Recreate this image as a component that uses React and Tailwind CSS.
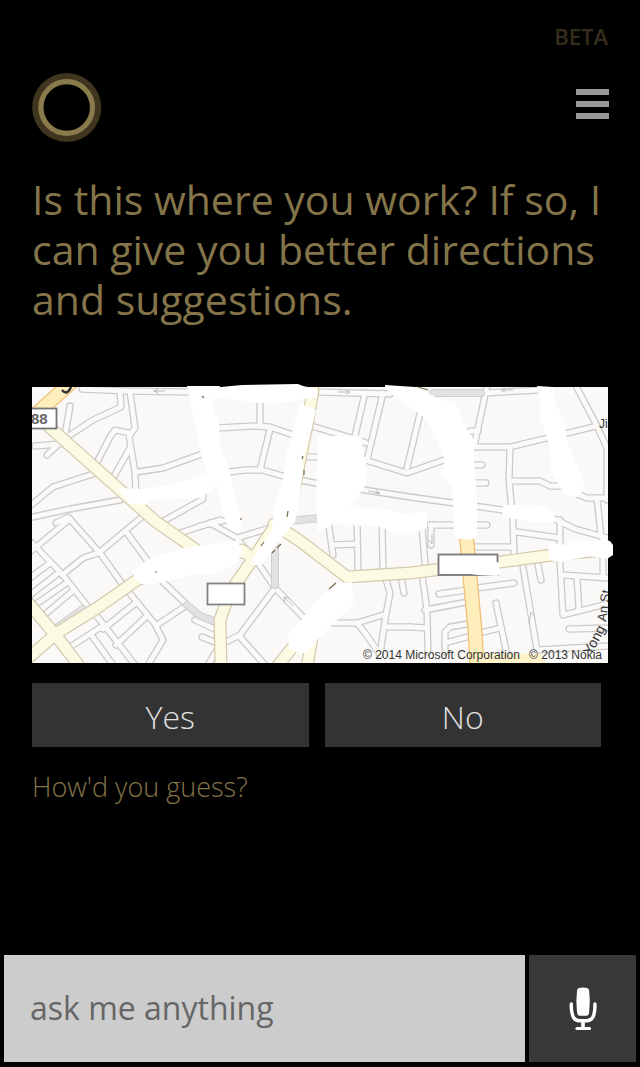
const streets = [
  'M82 389L127 391L187 392L220 391',
  'M70 406L64 441',
  'M120 391L121 407L93 420L64 439L47 455',
  'M130 392L135 428L129 436L135 472L136 495',
  'M129 433L115 430L110 437L95 466',
  'M130 448L113 478',
  'M35 446L60 444',
  'M137 472L163 468L202 454',
  'M30 506L53 487L93 474',
  'M28 518L70 509L120 500',
  'M203 493L203 499L160 523',
  'M100 552L143 516',
  'M56 523L68 517L100 553L123 585L155 624L163 640L148 665',
  'M32 543L37 548L63 575L88 607L100 620L135 665',
  'M30 552L70 519',
  'M62 575L83 558L98 553',
  'M30 578L50 563',
  'M30 595L57 574',
  'M32 607L65 584',
  'M43 616L74 590',
  'M127 533L163 582L187 605L157 625',
  'M103 629L137 602',
  'M116 645L147 616',
  'M67 649L101 627',
  'M92 636L113 665',
  'M195 620L217 630',
  'M202 637L217 643',
  'M217 650L208 665',
  'M180 533L220 520',
  'M200 526L232 519',
  'M317 392L390 394',
  'M260 400L260 426',
  'M218 428L253 426L270 427L296 436',
  'M270 429L260 470',
  'M229 472L245 470L262 470L290 478L320 484',
  'M308 425L352 438L366 443',
  'M365 393L355 436',
  'M383 393L367 460',
  'M365 460L407 473L447 459',
  'M422 405L407 468',
  'M358 489L410 497L503 510',
  'M298 457L320 457',
  'M485 393L538 390',
  'M487 386L474 447',
  'M470 431L478 431',
  'M473 447L510 447L597 426',
  'M575 384L597 426L607 448L607 500',
  'M510 447L509 480L513 522L514 556',
  'M472 465L482 465',
  'M472 483L486 483',
  'M510 481L540 481L550 486L563 486',
  'M577 494L587 498L608 498',
  'M597 498L601 536',
  'M555 519L575 529L608 538',
  'M422 574L427 610L428 652',
  'M425 610L467 602',
  'M439 594L467 590',
  'M477 588L514 583',
  'M410 627L427 628',
  'M445 652L445 632L450 627L467 624',
  'M445 643L467 637',
  'M480 633L500 628',
  'M496 603L507 655',
  'M523 567L537 650L608 646',
  'M537 560L541 580',
  'M560 520L560 563L563 615L603 605L608 603',
  'M563 575L608 578',
  'M577 578L579 610',
  'M603 540L603 578',
  'M569 629L608 628',
  'M473 547L514 547',
  'M517 532L560 538',
  'M430 525L487 525',
  'M431 525L431 545',
  'M421 515L425 563',
  'M328 520L333 555',
  'M357 520L358 570',
  'M382 520L383 570L390 593L385 620L380 655',
  'M333 545L357 544',
  'M401 577L404 593',
  'M333 623L357 623L383 615',
  'M357 623L365 633L379 653',
  'M387 627L410 627',
  'M258 563L275 588L305 619',
  'M275 588L240 635L224 643',
  'M240 637L265 665',
  'M237 538L273 527',
  'M210 523L237 538L256 563',
];

const greyRoads = ['M187 605L200 616L217 622', 'M275 545L275 585', 'M433 393L481 393', 'M290 521L320 518', 'M55 629L83 609'];

const avenues = [
  'M46 424L155 521L195 549',
  'M26 660L57 633L97 608L137 580L200 556L245 552',
  'M26 600L57 637L80 667',
  'M313 390L308 420L292 500L255 556L230 592L220 620L221 667',
  'M274 524L300 541L347 577L410 573L500 562L560 554L606 550',
  'M242 550L254 560',
  'M276 668L296 643',
  'M307 667L312 638',
];

const highways = ['M76 378L34 416', 'M466 530L470 577L475 630L477 667'];

const blanks = [
  'M187 386L220 386L212 404L219 423L220 449L227 463L230 473L236 500L241 519L241 531L237 533L230 530L225 519L217 486L208 476L202 459L197 436Z',
  'M210 388L242 385L298 384L303 386L317 389L317 397L298 400L284 403L260 403L235 400L210 396Z',
  'M301 404L316 410L310 435L303 457L303 470L299 500L295 522L286 532L262 565L252 565L253 558L272 530L274 508L284 475L285 460L294 425L298 408Z',
  'M318 436L362 436L363 452L366 462L366 485L350 507L375 508L408 514L427 510L427 528L415 533L390 533L383 527L333 524L318 533L316 500Z',
  'M385 385L415 387L433 396L457 405L466 428L474 440L474 463L477 500L477 537L470 540L454 538L453 500L452 485L441 474L445 460L435 435L425 418L408 406L385 389Z',
  'M537 386L553 387L555 400L564 422L567 440L575 460L584 482L583 491L577 497L567 497L560 487L550 468L551 455L548 440L540 418L540 400Z',
  'M503 505L540 505L554 512L555 522L540 523L503 517Z',
  'M118 488L140 489L165 486L207 474L217 487L200 498L152 500L145 505L128 503Z',
  'M132 570L153 557L183 548L220 543L237 541L243 550L238 562L220 573L190 575L160 583L145 585L135 580Z',
  'M287 637L320 597L338 583L352 582L354 603L320 637L307 652L300 654L290 649Z',
  'M548 543L569 545L571 541L597 541L602 539L610 541L613 545L613 555L607 559L590 556L560 562L550 560Z',
];

function Strokes({ paths, edge, fill, outer, inner }) {
  return (
    <g fill="none" strokeLinecap="round" strokeLinejoin="round">
      <g stroke={edge} strokeWidth={outer}>
        {paths.map((d) => <path key={d} d={d} />)}
      </g>
      <g stroke={fill} strokeWidth={inner}>
        {paths.map((d) => <path key={d} d={d} />)}
      </g>
    </g>
  );
}

function StreetMap() {
  return (
    <svg viewBox="32 387 576 276" className="block h-auto w-full overflow-visible" role="img" aria-label="Map">
      <defs>
        <clipPath id="map-frame">
          <rect x="32" y="387" width="576" height="276" />
        </clipPath>
      </defs>
      <g clipPath="url(#map-frame)">
        <rect x="32" y="387" width="576" height="276" fill="#faf9f7" />
        <Strokes paths={streets} edge="#cccbca" fill="#fbfaf9" outer={7.4} inner={4.8} />
        <Strokes paths={greyRoads} edge="#cfcfcf" fill="#e2e2e5" outer={8} inner={6} />
        <Strokes paths={avenues} edge="#d3c9ad" fill="#fdfae4" outer={13} inner={10.6} />
        <Strokes paths={highways} edge="#f0bd72" fill="#fdeebb" outer={15} inner={12.6} />
        <path d="M482 654L540 654L546 663L483 663Z" fill="#fdf2c8" />
        <g fill="none" stroke="#bdbdbd" strokeWidth="1">
          <path d="M153 391h12m-11 0l4-2m-4 2l4 2M338 392h12m0 0l-4-2m4 2l-4 2M501 390h12m-12 0l4-2m-4 2l4 2M368 491l12 2m0 0l-4-3m4 3l-5 1M284 597l9 9m-9-9l1 5m-1-5l5 1M529 624l2-12m0 0l3 4M432 534v10m0 0l-3-4" />
        </g>
        <path d="M62 390q5 6 9-3" fill="none" stroke="#333" strokeWidth="2.5" />
        <rect x="26" y="408.500" width="30.500" height="20" fill="#fff" stroke="#777" strokeWidth="1.800" />
        <g fontFamily="'Liberation Sans', Arial, sans-serif" fill="#333">
          <text x="31" y="424" fontSize="15" fontWeight="700" fill="#666">88</text>
          <text x="599" y="428" fontSize="12">Jiu</text>
          <text x="591" y="656" fontSize="14" transform="rotate(-62 591 656)">Yong</text>
          <text x="606" y="622" fontSize="13" transform="rotate(-82 606 622)">An St</text>
        </g>
      </g>
      <g fill="#fff">
        {blanks.map((d) => <path key={d} d={d} />)}
      </g>
      <g fill="none" stroke="#776b48" strokeWidth="1.200">
        <path d="M302 459l1-3M304 470v5M281 544l-4 4M275 550l-3 3M264 542l-3 4M336 583l-7 6M241 518v2M288 511l-1 6M418 387l10 3M202 396l2 2M155 572h2" />
      </g>
      <rect x="207.500" y="583.500" width="37" height="21" fill="#fff" stroke="#828282" strokeWidth="1.800" />
      <rect x="438.500" y="554.500" width="59" height="20.500" fill="#fff" stroke="#777" strokeWidth="1.800" />
      <path d="M447 557L480 560L491 559L499 563L500 573L497 576L478 575L450 571Z" fill="#fff" />
      <g fontFamily="'Liberation Sans', Arial, sans-serif" fontSize="12" fill="#333">
        <text x="363" y="659">© 2014 Microsoft Corporation</text>
        <text x="602" y="659" textAnchor="end">© 2013 Nokia</text>
      </g>
    </svg>
  );
}

export default function App() {
  return (
    <div className="flex min-h-screen flex-col bg-black font-['Open_Sans','Noto_Sans',sans-serif] text-[#84744a]">
      <header className="px-8 pt-6">
        <p className="text-right text-[22px] leading-6 font-semibold text-[#352d1c]">BETA</p>
        <div className="mt-6 flex items-start justify-between">
          <svg viewBox="0 0 70 70" className="size-[70px]" role="img" aria-label="Assistant">
            <circle cx="34.700" cy="35.500" r="34.500" fill="#40361f" />
            <circle cx="34.700" cy="35.500" r="25.800" fill="#000" stroke="#8a7b4d" strokeWidth="5.200" />
          </svg>
          <button type="button" aria-label="Menu" className="mt-4 -mr-px flex w-[33px] flex-col gap-1.5 py-px">
            <span className="h-1.5 w-full bg-[#9a9899]" />
            <span className="h-1.5 w-full bg-[#9a9899]" />
            <span className="h-1.5 w-full bg-[#9a9899]" />
          </button>
        </div>
      </header>

      <main className="flex-1 px-8 pt-8">
        <h1 className="text-[41px] leading-[50px]">
          Is this where you work? If so, I can give you better directions and suggestions.
        </h1>
        <div className="mt-[63px]">
          <StreetMap />
        </div>
        <div className="mt-5 mr-[7px] grid grid-cols-2 gap-4 text-[32px] font-light text-[#e0e0e0]">
          <button type="button" className="h-16 bg-[#333] pt-1">Yes</button>
          <button type="button" className="h-16 bg-[#333] pt-1">No</button>
        </div>
        <a href="#guess" className="mt-5 inline-block text-[27px] leading-10 font-light">How'd you guess?</a>
      </main>

      <form className="flex gap-1 px-1 pb-[5px]">
        <input
          type="text"
          aria-label="Ask me anything"
          placeholder="ask me anything"
          className="h-[107px] min-w-0 flex-1 bg-[#ccc] px-[26px] pb-0.5 text-[32px] text-[#333] outline-none placeholder:text-[#666]"
        />
        <button type="button" aria-label="Speak" className="flex h-[107px] w-[107px] items-center justify-center bg-[#383838]">
          <svg viewBox="0 0 28 44" className="h-11 w-7" fill="none">
            <path d="M10 1Q14 0 18 1Q20 1.500 20.200 4Q21.500 14 20.200 25Q20 28.500 17.500 28.800H10.500Q8.500 28.500 8 25Q6.700 14 8 4Q8.200 1.500 10 1Z" fill="#fff" />
            <path d="M2.300 17Q2 23 3.500 28Q5 33.500 10 33.800H18Q23 33.500 24.800 28Q26.200 23 25.900 17" stroke="#fff" strokeWidth="3.400" strokeLinecap="round" />
            <path d="M14 34V41" stroke="#fff" strokeWidth="3.600" />
            <path d="M8 41.500H20.500" stroke="#fff" strokeWidth="3.200" strokeLinecap="round" />
          </svg>
        </button>
      </form>
    </div>
  );
}
